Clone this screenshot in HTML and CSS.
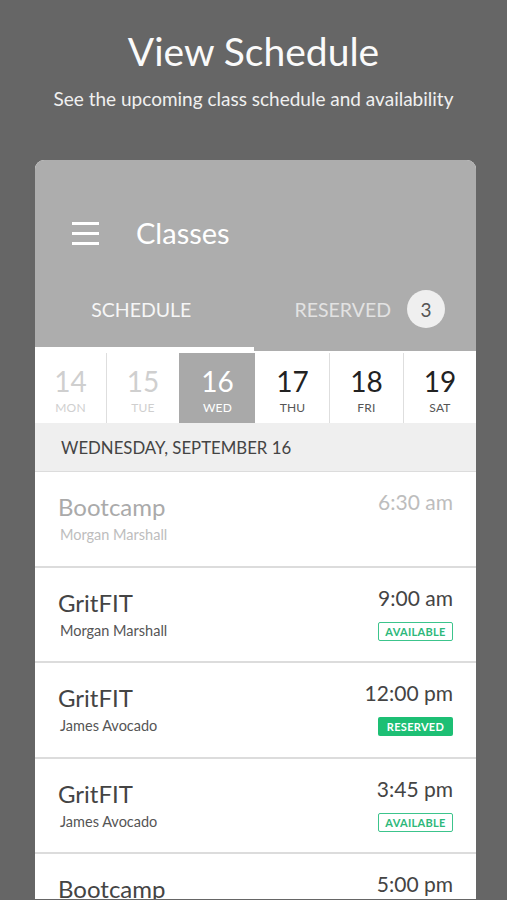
FILE: index.html
```html
<!DOCTYPE html>
<html lang="en">
<head>
<meta charset="utf-8">
<title>View Schedule</title>
<link rel="stylesheet" href="styles.css">
</head>
<body>
<div class="hero">
  <h1 class="hero-title">View Schedule</h1>
  <p class="hero-sub">See the upcoming class schedule and availability</p>
</div>
<div class="card">
  <div class="header">
    <div class="toolbar">
      <svg class="menu" width="27" height="24" viewBox="0 0 27 24"><rect x="0" y="1" width="27" height="3" fill="#fff"/><rect x="0" y="11" width="27" height="3" fill="#fff"/><rect x="0" y="21" width="27" height="3" fill="#fff"/></svg>
      <span class="toolbar-title">Classes</span>
    </div>
    <div class="tabs">
      <div class="tab tab-active">SCHEDULE</div>
      <div class="tab tab-other">RESERVED <span class="count">3</span></div>
    </div>
    <div class="indicator-track"><div class="indicator"></div></div>
  </div>
  <div class="days">
    <div class="day day-past"><span class="num">14</span><span class="lbl">MON</span></div>
    <div class="day day-past"><span class="num">15</span><span class="lbl">TUE</span></div>
    <div class="day day-sel"><span class="num">16</span><span class="lbl">WED</span></div>
    <div class="day"><span class="num">17</span><span class="lbl">THU</span></div>
    <div class="day"><span class="num">18</span><span class="lbl">FRI</span></div>
    <div class="day"><span class="num">19</span><span class="lbl">SAT</span></div>
  </div>
  <div class="date-head">WEDNESDAY, SEPTEMBER 16</div>
  <div class="row row-past">
    <div class="info"><div class="cls">Bootcamp</div><div class="inst">Morgan Marshall</div></div>
    <div class="meta"><div class="time">6:30 am</div></div>
  </div>
  <div class="row">
    <div class="info"><div class="cls">GritFIT</div><div class="inst">Morgan Marshall</div></div>
    <div class="meta"><div class="time">9:00 am</div><span class="tag tag-avail">AVAILABLE</span></div>
  </div>
  <div class="row">
    <div class="info"><div class="cls">GritFIT</div><div class="inst">James Avocado</div></div>
    <div class="meta"><div class="time">12:00 pm</div><span class="tag tag-res">RESERVED</span></div>
  </div>
  <div class="row">
    <div class="info"><div class="cls">GritFIT</div><div class="inst">James Avocado</div></div>
    <div class="meta"><div class="time">3:45 pm</div><span class="tag tag-avail">AVAILABLE</span></div>
  </div>
  <div class="row row-last">
    <div class="info"><div class="cls">Bootcamp</div></div>
    <div class="meta"><div class="time">5:00 pm</div></div>
  </div>
</div>
</body>
</html>
```

FILE: styles.css
```css
* { box-sizing: border-box; }
html, body { margin: 0; padding: 0; }
body {
  background: #666666;
  font-family: Lato, "Open Sans", sans-serif;
  height: 900px;
  overflow: hidden;
}
.hero {
  text-align: center;
  color: #fafafa;
  padding-top: 28px;
}
.hero-title {
  margin: 0;
  font-size: 39px;
  line-height: 47px;
  font-weight: 400;
}
.hero-sub {
  margin: 13px 0 0;
  font-size: 19px;
  line-height: 22px;
  color: #f0f0f0;
}
.card {
  margin: 50px 0 0 35px;
  width: 441px;
  background: #fff;
  border-radius: 9px 9px 0 0;
  overflow: hidden;
}
.header {
  background: #adadad;
  padding-top: 55px;
}
.toolbar {
  display: flex;
  align-items: center;
  height: 35px;
  padding-left: 37px;
}
.menu { display: block; margin-right: 37px; }
.toolbar-title {
  color: #fff;
  font-size: 29px;
  line-height: 35px;
}
.tabs {
  display: flex;
  margin-top: 39px;
  height: 40px;
  margin-bottom: 18px;
}
.tab {
  flex: 1;
  display: flex;
  align-items: center;
  justify-content: center;
  font-size: 19.5px;
}
.tab-active { color: #f6f6f6; padding-right: 6px; }
.tab-other { color: #e2e2e2; gap: 16px; padding-left: 10px; }
.count {
  width: 38px;
  height: 38px;
  border-radius: 50%;
  background: #efefef;
  color: #555;
  display: flex;
  align-items: center;
  justify-content: center;
  font-size: 19px;
}
.indicator-track { height: 4px; }
.indicator { width: 219px; height: 4px; background: #fff; }
.days {
  display: grid;
  grid-template-columns: 71px 73px 76px 74px 74px 1fr;
  padding-top: 2px;
  background: #fff;
}
.day {
  height: 70px;
  display: flex;
  flex-direction: column;
  align-items: center;
  padding-top: 11px;
  border-left: 1px solid #dedede;
}
.day:first-child { border-left: none; }
.num {
  font-size: 28px;
  line-height: 34px;
  color: #222;
}
.lbl {
  margin-top: 3px;
  font-size: 12px;
  line-height: 14px;
  color: #555;
  letter-spacing: 0.2px;
}
.day-past .num, .day-past .lbl { color: #cfcfcf; }
.day-sel { background: #a9a9a9; border-left-color: #a9a9a9; }
.day-sel + .day { border-left-color: #fff; }
.day-sel .num, .day-sel .lbl { color: #fff; }
.date-head {
  height: 49px;
  background: #efefef;
  border-bottom: 1px solid #dcdcdc;
  display: flex;
  align-items: center;
  padding-left: 26px;
  font-size: 16.8px;
  color: #444;
}
.row {
  display: flex;
  justify-content: space-between;
  height: 95.5px;
  padding: 20px 23px 0 23px;
  border-bottom: 2px solid #dcdcdc;
}
.cls {
  font-size: 24px;
  line-height: 29px;
  color: #444;
}
.inst {
  margin-top: 5px;
  padding-left: 2px;
  font-size: 14.5px;
  line-height: 17px;
  color: #555;
}
.meta {
  display: flex;
  flex-direction: column;
  align-items: flex-end;
}
.time {
  margin-top: -3px;
  font-size: 21px;
  line-height: 25px;
  color: #444;
}
.tag {
  margin-top: 12px;
  width: 75px;
  height: 19px;
  display: flex;
  align-items: center;
  justify-content: center;
  font-size: 11px;
  font-weight: 700;
  letter-spacing: 0.3px;
  border-radius: 2px;
}
.tag-avail { border: 1.5px solid #3cc48c; color: #2db87a; }
.tag-res { background: #1dbf74; color: #fff; }
.row-past .cls { color: #aaa; }
.row-past .inst { color: #bdbdbd; }
.row-past .time { color: #bdbdbd; }
.row-last { height: 45px; border-bottom: none; }
```
